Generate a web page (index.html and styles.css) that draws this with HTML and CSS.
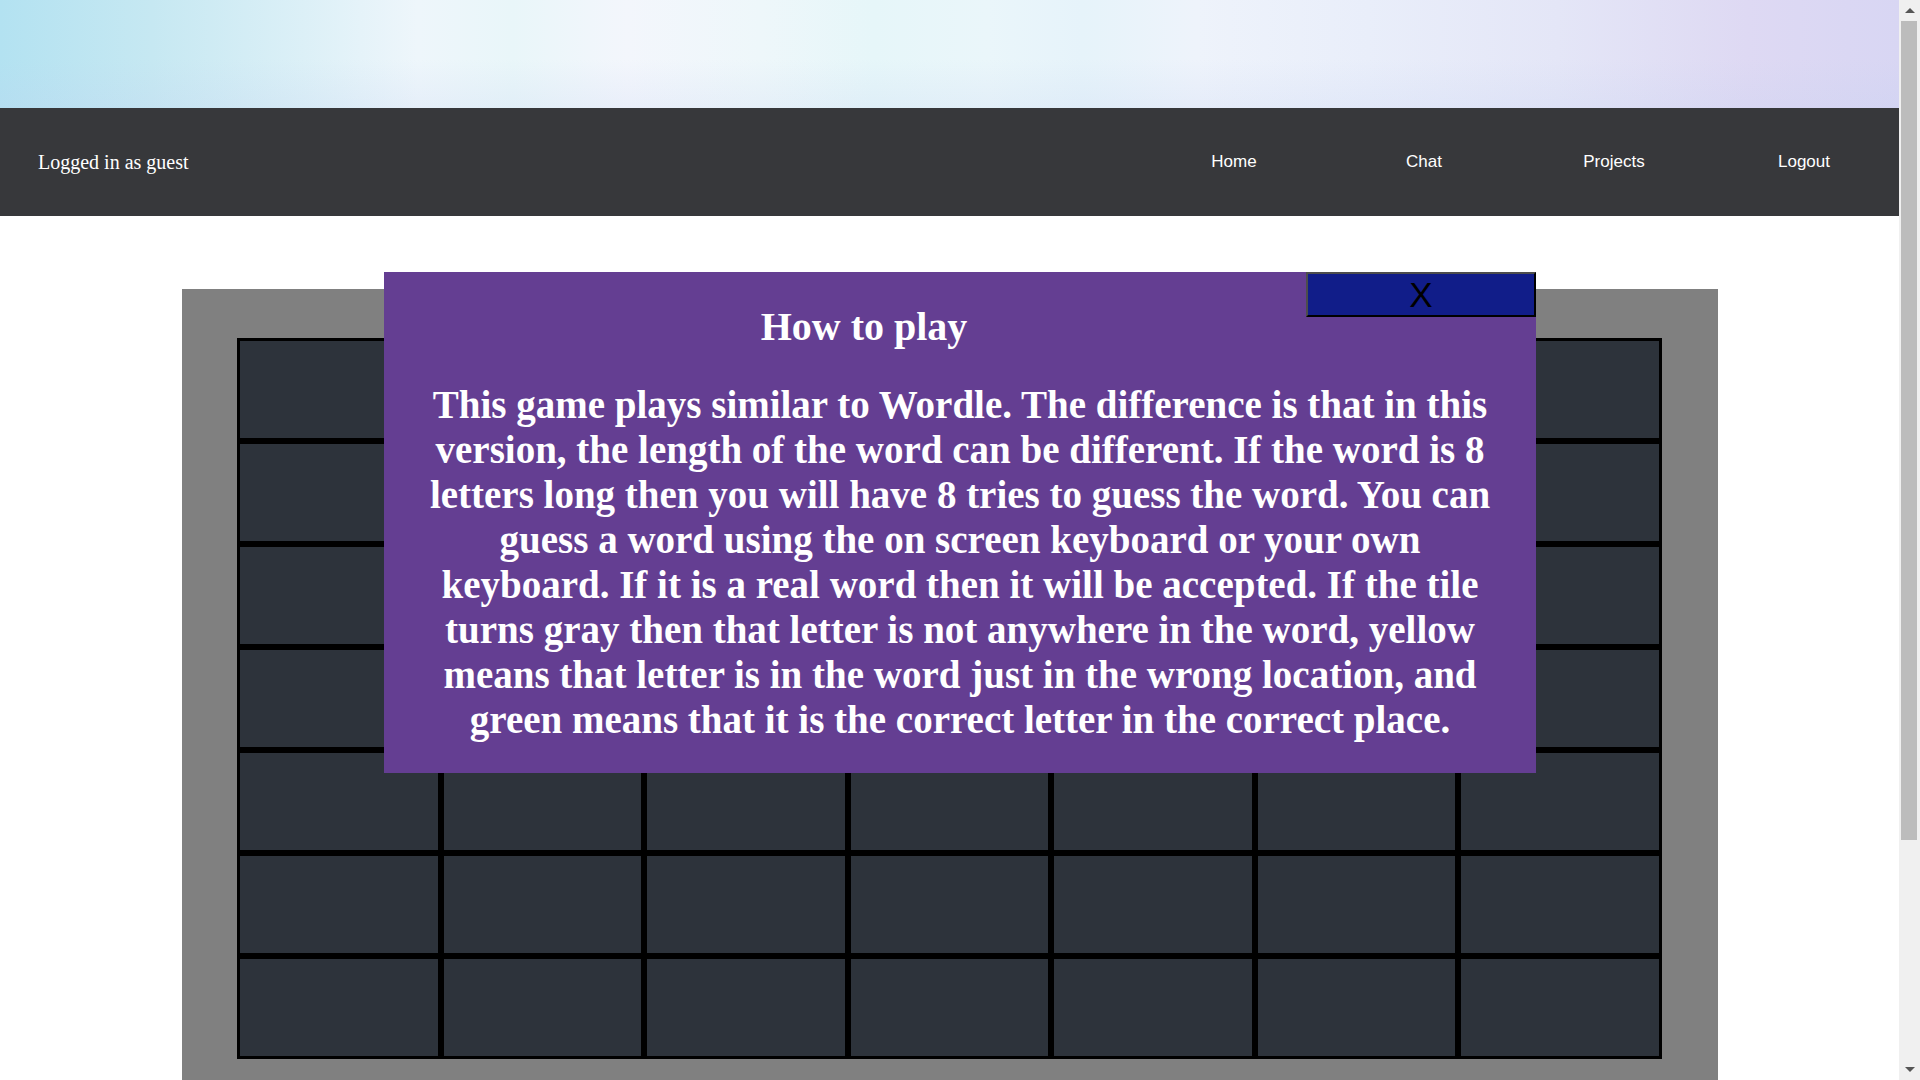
FILE: index.html
```html
<!DOCTYPE html>
<html lang="en">
<head>
<meta charset="utf-8">
<title>Wordle</title>
<link rel="stylesheet" href="styles.css">
</head>
<body>
<header class="banner"></header>
<nav class="navbar">
  <span class="user">Logged in as guest</span>
  <ul class="links">
    <li><a href="#">Home</a></li>
    <li><a href="#">Chat</a></li>
    <li><a href="#">Projects</a></li>
    <li><a href="#">Logout</a></li>
  </ul>
</nav>
<main class="game">
  <div class="board">
    <div class="grid">
      <div class="cell"></div><div class="cell"></div><div class="cell"></div><div class="cell"></div><div class="cell"></div><div class="cell"></div><div class="cell"></div>
      <div class="cell"></div><div class="cell"></div><div class="cell"></div><div class="cell"></div><div class="cell"></div><div class="cell"></div><div class="cell"></div>
      <div class="cell"></div><div class="cell"></div><div class="cell"></div><div class="cell"></div><div class="cell"></div><div class="cell"></div><div class="cell"></div>
      <div class="cell"></div><div class="cell"></div><div class="cell"></div><div class="cell"></div><div class="cell"></div><div class="cell"></div><div class="cell"></div>
      <div class="cell"></div><div class="cell"></div><div class="cell"></div><div class="cell"></div><div class="cell"></div><div class="cell"></div><div class="cell"></div>
      <div class="cell"></div><div class="cell"></div><div class="cell"></div><div class="cell"></div><div class="cell"></div><div class="cell"></div><div class="cell"></div>
      <div class="cell"></div><div class="cell"></div><div class="cell"></div><div class="cell"></div><div class="cell"></div><div class="cell"></div><div class="cell"></div>
    </div>
  </div>
</main>
<div class="modal">
  <button class="close">X</button>
  <h2 class="title">How to play</h2>
  <p class="rules">This game plays similar to Wordle. The difference is that in this version, the length of the word can be different. If the word is 8 letters long then you will have 8 tries to guess the word. You can guess a word using the on screen keyboard or your own keyboard. If it is a real word then it will be accepted. If the tile turns gray then that letter is not anywhere in the word, yellow means that letter is in the word just in the wrong location, and green means that it is the correct letter in the correct place.</p>
</div>
<div class="scrollbar" aria-hidden="true">
  <div class="sb-button"><span class="arrow-up"></span></div>
  <div class="sb-thumb"></div>
  <div class="sb-track"></div>
  <div class="sb-button"><span class="arrow-down"></span></div>
</div>
</body>
</html>
```

FILE: styles.css
```css
html, body {
  margin: 0;
  padding: 0;
}

body {
  padding-right: 21px;
  font-family: "Liberation Serif", "Times New Roman", serif;
  background: #ffffff;
}

.banner {
  height: 108px;
  background:
    linear-gradient(to bottom, rgba(255, 255, 255, 0) 55%, rgba(190, 205, 240, 0.18) 100%),
    linear-gradient(90deg,
      #b3e2f1 0%,
      #c6e8f2 8%,
      #dcf0f7 16%,
      #eef6fb 22%,
      #e9f6f9 27%,
      #f3f6fc 33%,
      #eef7fa 40%,
      #e6f6f9 46%,
      #eaf6fa 52%,
      #e6f3fa 57%,
      #eef3fb 63%,
      #e9eefa 72%,
      #e4e6f7 82%,
      #ded9f3 92%,
      #d8d6f3 100%);
}

.navbar {
  height: 108px;
  background: #37383b;
  color: #ffffff;
  display: flex;
  align-items: center;
  justify-content: space-between;
  padding-left: 38px;
}

.user {
  font-size: 20px;
}

.links {
  display: flex;
  list-style: none;
  margin: 0;
  padding: 0;
}

.links li {
  width: 190px;
  text-align: center;
}

.links a {
  font-family: "Liberation Sans", Arial, sans-serif;
  font-size: 17px;
  color: #ffffff;
  text-decoration: none;
}

.game {
  padding-top: 73px;
}

.board {
  width: 80vw;
  margin: 0 auto;
  background: #808080;
  padding: 49px 0 311px;
}

.grid {
  width: 1425px;
  margin: 0 auto;
  display: grid;
  grid-template-columns: repeat(7, 1fr);
  grid-template-rows: repeat(7, 103px);
}

.cell {
  border: 3px solid #000000;
  background: #2d333b;
}

.modal {
  position: fixed;
  top: 272px;
  left: 20vw;
  width: 60vw;
  box-sizing: border-box;
  background: #643e92;
  color: #ffffff;
  text-align: center;
  padding: 32px 40px 31px;
}

.close {
  position: absolute;
  top: 0;
  right: 0;
  width: 230px;
  height: 45px;
  padding: 0;
  background: #111d89;
  border: 2px solid;
  border-color: #4d4d4d #000000 #000000 #4d4d4d;
  color: #000000;
  font-family: "Liberation Sans", Arial, sans-serif;
  font-size: 35px;
  line-height: 1;
}

.title {
  margin: 0 192px 32px 0;
  font-size: 40px;
  line-height: 46px;
  font-weight: bold;
}

.rules {
  margin: 0;
  font-size: 39px;
  line-height: 45px;
  font-weight: bold;
}

/* Classic scrollbar drawn over the right edge */
.scrollbar {
  position: fixed;
  top: 0;
  right: 0;
  width: 21px;
  height: 1080px;
  background: #f0f0f0;
  display: flex;
  flex-direction: column;
}

.sb-button {
  height: 21px;
  flex: none;
  display: flex;
  align-items: center;
  justify-content: center;
}

.arrow-up {
  width: 0;
  height: 0;
  border-left: 5px solid transparent;
  border-right: 5px solid transparent;
  border-bottom: 5px solid #555555;
}

.arrow-down {
  width: 0;
  height: 0;
  border-left: 5px solid transparent;
  border-right: 5px solid transparent;
  border-top: 5px solid #555555;
}

.sb-thumb {
  height: 819px;
  flex: none;
  margin: 0 3px 0 2px;
  background: #bcbcbc;
}

.sb-track {
  flex: 1;
}
```
